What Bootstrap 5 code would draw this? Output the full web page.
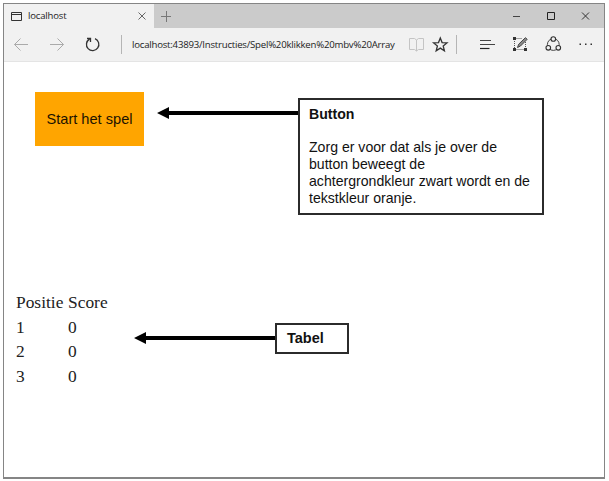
<!DOCTYPE html>
<html lang="nl">
<head>
<meta charset="utf-8">
<meta name="viewport" content="width=device-width, initial-scale=1">
<title>localhost</title>
<link href="https://cdn.jsdelivr.net/npm/bootstrap@5.3.0/dist/css/bootstrap.min.css" rel="stylesheet">
<style>
body{background:#fff;padding:3px;overflow:hidden;color:#000;font-family:"Liberation Sans",Arial,sans-serif}
svg{display:block;flex:none}
.browser{width:602px;height:476px;border:1px solid #858585;border-bottom-width:2px}
.chrome-ui{font-family:"Open Sans","Noto Sans",sans-serif;font-size:9.5px;line-height:14px;color:#222;white-space:nowrap}
.tabstrip{height:24px;background:#cbcbcb}
.tab-current{width:150px;background:#f1f1f1;padding:0 8px 0 7px}
.tab-title{margin-left:6px;letter-spacing:-.15px}
.toolbar{height:34px;background:#f1f1f1;border-bottom:1px solid #e4e4e4}
.divider{width:1px;height:19px;background:#b5b5b5;flex:none}
.url{width:284px;padding-left:10px;font-size:9.65px;letter-spacing:-.225px;color:#222}
.start{width:109px;height:54px;margin:30px 0 0 31px;background:orange;border:0;border-radius:0;color:#1c1300;font-size:14.6px;padding:2px 0 0}
.start:hover{background:#000;color:orange}
.demo{height:232px}
.arrow-one{margin:45px 0 0 13px}
.note{border:2px solid #2b2b2b;font-size:14.1px;line-height:17.1px;color:#111}
.note-one{width:246px;height:117px;margin-top:36px;padding:6px 0 0 9px}
.note-two{width:74px;height:31px;margin-top:29px;padding:5px 0 0 10px;font-size:14.5px}
.arrow-two{margin:38px 0 0 0}
.scores{width:118px;margin:-4px 0 0 12px;font-family:"Liberation Serif","Times New Roman",serif;font-size:17.4px;line-height:24.5px;color:#222}
.scores td,.scores th{padding:0;font-weight:400}
.scores th:first-child{width:52px}
</style>
<script src="https://cdn.jsdelivr.net/npm/bootstrap@5.3.0/dist/js/bootstrap.bundle.min.js"></script>
</head>
<body>
<div class="browser">
  <header class="chrome-ui">
    <div class="tabstrip d-flex align-items-center">
      <div class="tab-current h-100 d-flex align-items-center">
        <svg width="11" height="9" fill="none" stroke="#333"><path d="M.5.5h10v8H.5zM.5 2.5h10"/></svg>
        <span class="tab-title">localhost</span>
        <svg class="ms-auto" width="8" height="8" fill="none" stroke="#666"><path d="M.5.5l7 7m0-7l-7 7"/></svg>
      </div>
      <svg width="450" height="24" fill="none" stroke="#777"><path d="M7 12.500h10M12.500 7v11"/><path d="M359 12.500h7" stroke="#444"/><path d="M393.500 8.500h7v7h-7z" stroke="#222"/><path d="M428 8.500l7 7m0-7l-7 7" stroke="#333"/></svg>
    </div>
    <div class="toolbar d-flex align-items-center">
      <svg width="117" height="33" fill="none" stroke="#aaa"><path d="M24 16.500H10.500m6-6l-6 6 6 6M46 16.500h13.500m-6-6l6 6-6 6"/><path d="M91 10.700a6.200 6.200 0 1 1-5.500.4M83 10.500h3.500v3.500" stroke="#333" stroke-width="1.300"/></svg>
      <span class="divider"></span>
      <span class="url">localhost:43893/Instructies/Spel%20klikken%20mbv%20Array</span>
      <svg width="50" height="33" fill="none" stroke="#c4c4c4"><path d="M3.500 10.500h5l2 1.500 2-1.500h5v11h-5l-2 1.500-2-1.500h-5zM10.500 12v11"/><path d="M34.300 10l1.800 4.600 4.900.3-3.800 3.100 1.200 4.800-4.100-2.700-4.100 2.700 1.200-4.800-3.800-3.100 4.900-.3z" stroke="#333" stroke-width="1.300"/></svg>
      <span class="divider"></span>
      <svg width="146" height="33" fill="none" stroke="#444"><path d="M23 12.500h11M23 16.500h15" stroke-width="1"/><path d="M23 20.500h9.500" stroke="#222" stroke-width="1.200"/><path d="M57.500 11v11M57.500 10.500h8M68.500 14v8M57.500 21.500h11" stroke="#555" stroke-dasharray="1 1"/><path d="M60.500 19.500l1.200-3.300 6.700-6.500 1.800 1.600-6.700 6.700z" fill="#888"/><path d="M56 9h3v3h-3zM56 20h3v3h-3zM67 20h3v3h-3z" fill="#333" stroke="none"/><circle cx="96.300" cy="16.500" r="5.900"/><g fill="#f1f1f1" stroke="#333" stroke-width="1.100"><circle cx="96.300" cy="11" r="2.300"/><circle cx="91.300" cy="19.800" r="2.300"/><circle cx="101.300" cy="19.800" r="2.300"/></g><path d="M122.500 15.500h1.500v1.500h-1.500zM128 15.500h1.500v1.500H128zM133.500 15.500h1.500v1.500h-1.500z" fill="#333" stroke="none"/></svg>
    </div>
  </header>
  <main>
    <section class="demo d-flex align-items-start">
      <button class="btn start" type="button">Start het spel</button>
      <svg class="arrow-one" width="141" height="12"><path d="M0 6L12 0v4h129v4H12v4z"/></svg>
      <div class="note note-one"><strong>Button</strong><p class="mb-0 mt-3">Zorg er voor dat als je over de<br>button beweegt de<br>achtergrondkleur zwart wordt en de<br>tekstkleur oranje.</p></div>
    </section>
    <section class="d-flex align-items-start">
      <div class="scores"><table><thead><tr><th>Positie</th><th>Score</th></tr></thead><tbody><tr><td>1</td><td>0</td></tr><tr><td>2</td><td>0</td></tr><tr><td>3</td><td>0</td></tr></tbody></table></div>
      <svg class="arrow-two" width="141" height="12"><path d="M0 6L12 0v4h129v4H12v4z"/></svg>
      <div class="note note-two"><strong>Tabel</strong></div>
    </section>
  </main>
</div>
</body>
</html>
